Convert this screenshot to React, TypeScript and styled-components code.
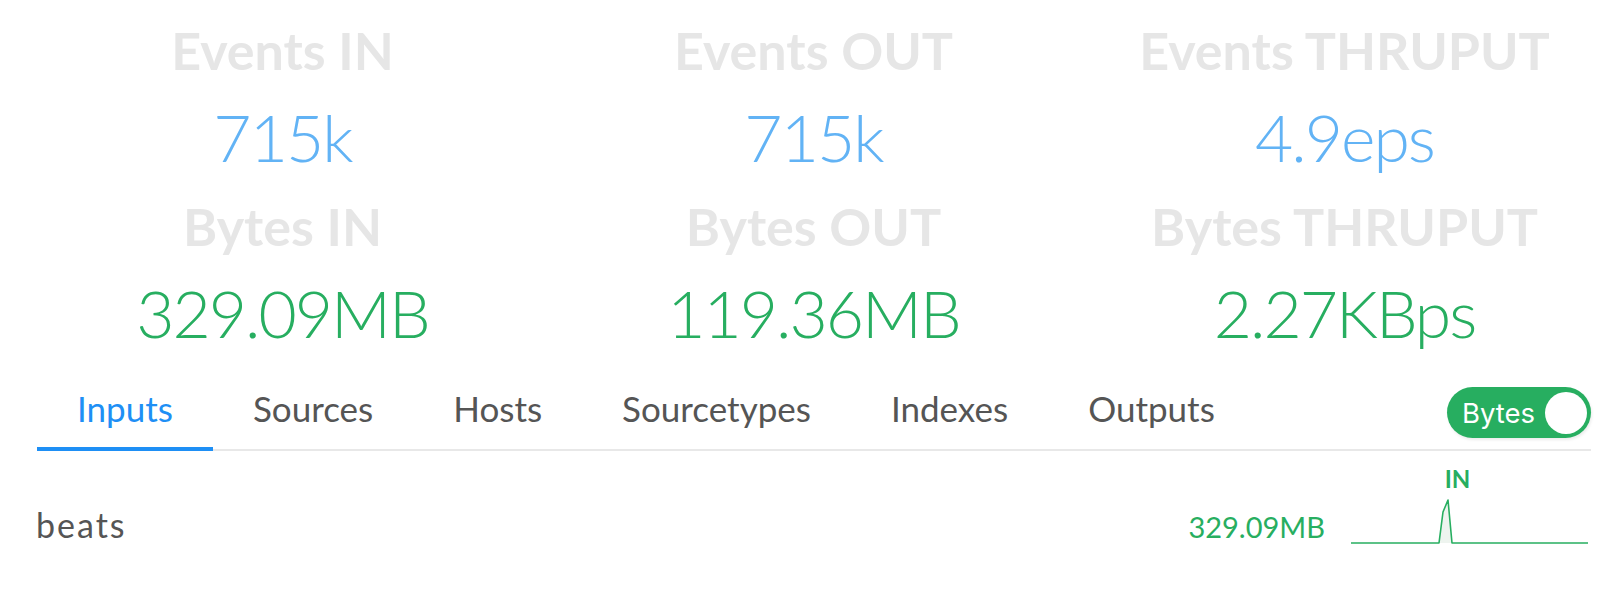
import React from 'react';
import styled, { createGlobalStyle } from 'styled-components';

const GlobalStyle = createGlobalStyle`
  body {
    margin: 0;
    background: #ffffff;
    font-family: Lato, "Noto Sans", sans-serif;
  }
`;

const Page = styled.div`
  width: 1616px;
`;

const StatsGrid = styled.section`
  display: grid;
  grid-template-columns: repeat(3, 1fr);
  row-gap: 30px;
  padding: 24px 6px 0 17px;
`;

const StatCell = styled.div`
  display: flex;
  flex-direction: column;
  align-items: center;
  gap: 28px;
`;

const StatLabel = styled.div`
  font-size: 52px;
  line-height: 52px;
  font-weight: 700;
  color: #e6e6e6;
  white-space: nowrap;
`;

const StatValue = styled.div<{ $tone: 'blue' | 'green' }>`
  font-size: 66px;
  line-height: 66px;
  font-weight: 300;
  letter-spacing: -2px;
  color: ${(p) => (p.$tone === 'blue' ? '#62b3f5' : '#27ae60')};
  white-space: nowrap;
`;

const TabBar = styled.nav`
  display: flex;
  align-items: flex-end;
  justify-content: space-between;
  height: 62px;
  margin: 41px 25px 0 37px;
  border-bottom: 2px solid #e8e8e8;
`;

const TabList = styled.div`
  display: flex;
  align-items: flex-end;
`;

const Tab = styled.button<{ $active?: boolean }>`
  margin: 0 0 -2px;
  padding: 0 40px 21px;
  border: none;
  border-bottom: 4px solid ${(p) => (p.$active ? '#1e8ff5' : 'transparent')};
  background: none;
  font-family: Lato, "Noto Sans", sans-serif;
  font-size: 35px;
  line-height: 35px;
  font-weight: 400;
  color: ${(p) => (p.$active ? '#1e8ff5' : '#555555')};
  cursor: pointer;
`;

const Toggle = styled.button`
  display: flex;
  align-items: center;
  justify-content: space-between;
  box-sizing: border-box;
  width: 144px;
  height: 51px;
  margin-bottom: 11px;
  padding: 0 4px 0 15px;
  border: none;
  border-radius: 26px;
  background: #27ae60;
  box-shadow: 1px 2px 3px rgba(0, 0, 0, 0.08);
  cursor: pointer;
`;

const ToggleText = styled.span`
  font-family: Inter, "Liberation Sans", sans-serif;
  font-size: 27.5px;
  color: #ffffff;
`;

const ToggleKnob = styled.span`
  width: 42px;
  height: 42px;
  border-radius: 50%;
  background: #ffffff;
`;

const Row = styled.div`
  display: flex;
  align-items: flex-end;
  padding: 16px 28px 0 36px;
`;

const RowName = styled.div`
  flex: 1;
  margin-bottom: 3px;
  font-size: 34px;
  line-height: 34px;
  letter-spacing: 2px;
  color: #555555;
`;

const RowValue = styled.div`
  margin: 0 26px 4px 0;
  font-size: 29px;
  line-height: 29px;
  color: #27ae60;
`;

const Chart = styled.div`
  display: flex;
  flex-direction: column;
  width: 237px;
`;

const ChartLabel = styled.div`
  padding-right: 24px;
  text-align: center;
  font-size: 24px;
  line-height: 24px;
  font-weight: 700;
  color: #27ae60;
`;

const Spark = styled.svg`
  display: block;
  margin-top: 6px;
`;

const stats = [
  { label: 'Events IN', value: '715k', tone: 'blue' as const },
  { label: 'Events OUT', value: '715k', tone: 'blue' as const },
  { label: 'Events THRUPUT', value: '4.9eps', tone: 'blue' as const },
  { label: 'Bytes IN', value: '329.09MB', tone: 'green' as const },
  { label: 'Bytes OUT', value: '119.36MB', tone: 'green' as const },
  { label: 'Bytes THRUPUT', value: '2.27KBps', tone: 'green' as const },
];

const tabs = ['Inputs', 'Sources', 'Hosts', 'Sourcetypes', 'Indexes', 'Outputs'];

const Sparkline: React.FC = () => (
  <Spark width="237" height="48" viewBox="0 0 237 48">
    <path d="M88 46 L92 15 L97 3 L101 46 Z" fill="#eef4ef" />
    <polyline
      points="0,46 88,46 92,15 97,3 101,46 237,46"
      fill="none"
      stroke="#27ae60"
      strokeWidth="1.6"
      strokeLinejoin="round"
    />
  </Spark>
);

const App: React.FC = () => {
  const [active, setActive] = React.useState('Inputs');

  return (
    <Page>
      <GlobalStyle />
      <StatsGrid>
        {stats.map((s) => (
          <StatCell key={s.label}>
            <StatLabel>{s.label}</StatLabel>
            <StatValue $tone={s.tone}>{s.value}</StatValue>
          </StatCell>
        ))}
      </StatsGrid>
      <TabBar>
        <TabList>
          {tabs.map((t) => (
            <Tab key={t} $active={t === active} onClick={() => setActive(t)}>
              {t}
            </Tab>
          ))}
        </TabList>
        <Toggle>
          <ToggleText>Bytes</ToggleText>
          <ToggleKnob />
        </Toggle>
      </TabBar>
      <Row>
        <RowName>beats</RowName>
        <RowValue>329.09MB</RowValue>
        <Chart>
          <ChartLabel>IN</ChartLabel>
          <Sparkline />
        </Chart>
      </Row>
    </Page>
  );
};

export default App;
